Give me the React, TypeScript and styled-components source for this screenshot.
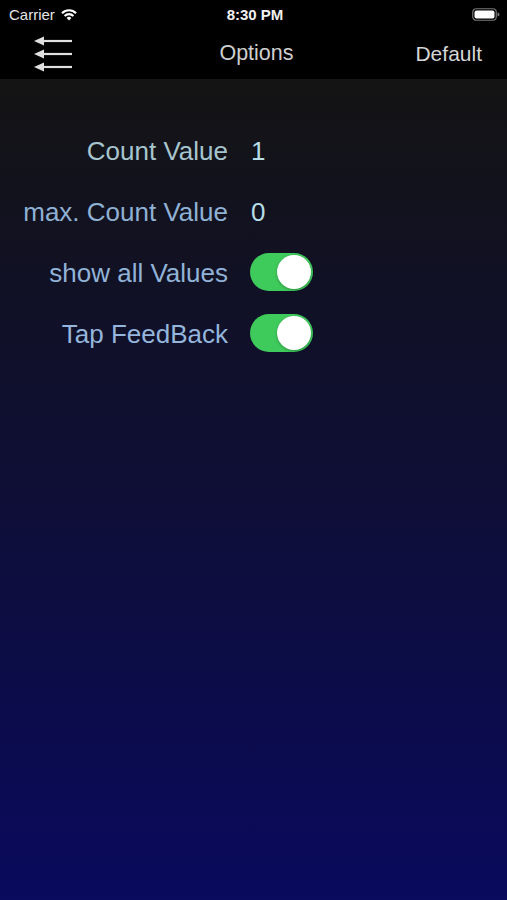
import React from 'react'
import styled, { createGlobalStyle } from 'styled-components'

const GlobalStyle = createGlobalStyle`
  html, body {
    margin: 0;
    padding: 0;
    background: #000;
  }
  body {
    font-family: 'Liberation Sans', Arial, sans-serif;
  }
`

const Screen = styled.div`
  width: 507px;
  height: 900px;
  display: flex;
  flex-direction: column;
  overflow: hidden;
`

const StatusBar = styled.div`
  height: 28px;
  background: #000;
  display: grid;
  grid-template-columns: 1fr auto 1fr;
  align-items: center;
  padding: 0 7px 0 9px;
  color: #fff;
  font-size: 15px;
`

const Carrier = styled.div`
  display: flex;
  align-items: center;
  gap: 5px;
  color: #e6e6e6;
`

const Clock = styled.div`
  font-weight: bold;
  font-size: 15px;
  color: #f0f0f0;
  padding-left: 1px;
`

const BatteryWrap = styled.div`
  display: flex;
  justify-content: flex-end;
`

const NavBar = styled.div`
  height: 51px;
  background: #000;
  display: grid;
  grid-template-columns: 1fr auto 1fr;
  align-items: center;
  padding: 0 25px 0 34px;
`

const NavTitle = styled.div`
  font-size: 21.5px;
  color: #cfcfcf;
  padding-right: 3px;
`

const NavAction = styled.div`
  font-size: 21px;
  color: #d6d6d6;
  text-align: right;
`

const Content = styled.div`
  flex: 1;
  background: linear-gradient(180deg, #141414 0%, #0e0e36 50%, #0a0a5e 100%);
  padding-top: 50px;
  display: flex;
  flex-direction: column;
  gap: 16px;
`

const Row = styled.div`
  display: grid;
  grid-template-columns: 228px auto;
  column-gap: 22px;
  align-items: center;
  height: 45px;
`

const Label = styled.div<{ $tone?: string }>`
  text-align: right;
  font-size: 26px;
  color: ${({ $tone }) => $tone || '#9fbdd6'};
  white-space: nowrap;
`

const Value = styled.div`
  font-size: 26px;
  color: #b6dde6;
  padding-left: 1px;
`

const Toggle = styled.div`
  width: 63px;
  height: 38px;
  margin-top: -4px;
  border-radius: 19px;
  background: #3fcb5c;
  display: flex;
  justify-content: flex-end;
  align-items: center;
  padding: 2px;
  box-sizing: border-box;
`

const Knob = styled.div`
  width: 34px;
  height: 34px;
  border-radius: 50%;
  background: #fff;
  box-shadow: 0 1px 3px rgba(0, 0, 0, 0.3);
`

const WifiIcon = () => (
  <svg width="18" height="13" viewBox="0 0 18 13">
    <path d="M9 12.5 L6.6 10 A3.4 3.4 0 0 1 11.4 10 Z" fill="#fff" />
    <path d="M4.6 8 A6.2 6.2 0 0 1 13.4 8" stroke="#fff" strokeWidth="2.2" fill="none" />
    <path d="M2 5.2 A9.8 9.8 0 0 1 16 5.2" stroke="#fff" strokeWidth="2.2" fill="none" />
  </svg>
)

const BatteryIcon = () => (
  <svg width="28" height="13" viewBox="0 0 28 13">
    <rect x="0.75" y="0.75" width="23.5" height="11.5" rx="3.5" stroke="#777" strokeWidth="1.2" fill="none" />
    <rect x="2.5" y="2.5" width="20" height="8" rx="2" fill="#fff" />
    <path d="M25.5 4.5 A2 2 0 0 1 25.5 8.5 Z" fill="#777" />
  </svg>
)

const BackListIcon = () => (
  <svg width="40" height="38" viewBox="0 0 40 38">
    {[6, 19, 32].map((y) => (
      <g key={y}>
        <line x1="8" y1={y} x2="38" y2={y} stroke="#e0e0e0" strokeWidth="2.2" />
        <path d={`M0 ${y} L10 ${y - 4.5} L10 ${y + 4.5} Z`} fill="#e0e0e0" />
      </g>
    ))}
  </svg>
)

const options: { label: string; tone?: string; value?: string; toggle?: boolean }[] = [
  { label: 'Count Value', tone: '#a7c5cf', value: '1' },
  { label: 'max. Count Value', tone: '#8fb1d4', value: '0' },
  { label: 'show all Values', tone: '#91b3d8', toggle: true },
  { label: 'Tap FeedBack', tone: '#94b6dc', toggle: true },
]

export default function App() {
  return (
    <Screen>
      <GlobalStyle />
      <StatusBar>
        <Carrier>
          Carrier <WifiIcon />
        </Carrier>
        <Clock>8:30 PM</Clock>
        <BatteryWrap>
          <BatteryIcon />
        </BatteryWrap>
      </StatusBar>
      <NavBar>
        <BackListIcon />
        <NavTitle>Options</NavTitle>
        <NavAction>Default</NavAction>
      </NavBar>
      <Content>
        {options.map((o) => (
          <Row key={o.label}>
            <Label $tone={o.tone}>{o.label}</Label>
            {o.toggle ? (
              <Toggle>
                <Knob />
              </Toggle>
            ) : (
              <Value>{o.value}</Value>
            )}
          </Row>
        ))}
      </Content>
    </Screen>
  )
}
